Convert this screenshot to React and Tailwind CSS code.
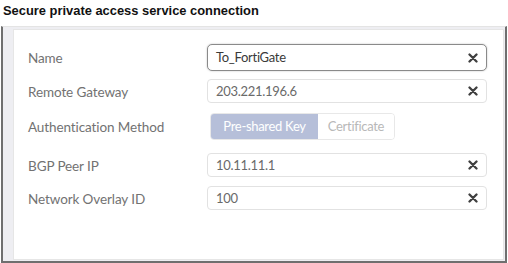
import React from "react";

function XIcon() {
  return (
    <svg width="10" height="10" viewBox="0 0 10 10" className="shrink-0">
      <path d="M1.5 1.5 L8.5 8.5 M8.5 1.5 L1.5 8.5" stroke="#3f3f3f" strokeWidth="2.3" strokeLinecap="round" />
    </svg>
  );
}

function Field({ value, focused }) {
  return (
    <div
      className={
        focused
          ? "w-[280px] h-full flex items-center justify-between pl-[8px] pr-[8px] border border-[#8a8a8a] rounded-[5px] bg-white shadow-[0_0_2px_rgba(0,0,0,0.25)] text-[#3a3a3a]"
          : "w-[280px] h-full flex items-center justify-between pl-[8px] pr-[8px] border border-[#e2e2e2] rounded-[4px] bg-white text-[#6a6a6a]"
      }
    >
      <span className="text-[13px] tracking-[-0.3px] pt-[1px]">{value}</span>
      <XIcon />
    </div>
  );
}

function Row({ label, children, className }) {
  return (
    <div className={"flex items-center " + className}>
      <div className="w-[179px] text-[13.5px] text-[#727272] tracking-[-0.1px] pt-[2px]">{label}</div>
      {children}
    </div>
  );
}

export default function App() {
  return (
    <div className="w-[508px] h-[263px] bg-white flex flex-col overflow-hidden" style={{ fontFamily: "Lato, 'Open Sans', sans-serif" }}>
      <div className="pl-[3px] pt-[1px] h-[26px] text-[12.9px] font-bold text-[#111]" style={{ fontFamily: "'Liberation Sans', Arial, sans-serif" }}>
        Secure private access service connection
      </div>
      <div className="flex-1 ml-[1px] mr-[1px] border-l-2 border-r-2 border-b-2 border-[#6f6f6f] border-t border-t-[#e4e4e4] bg-[#eeeef2] pl-[10px] pr-[1px] pt-[2px] pb-[1px] flex">
        <div className="flex-1 bg-white border border-[#e6e6e6] pl-[14px] flex flex-col">
          <Row label="Name" className="mt-[14px] h-[27px]">
            <Field value="To_FortiGate" focused />
          </Row>
          <Row label="Remote Gateway" className="mt-[8px] h-[24px]">
            <Field value="203.221.196.6" />
          </Row>
          <Row label="Authentication Method" className="mt-[10px] h-[27px]">
            <div className="h-full flex ml-[3px] rounded-[4px] overflow-hidden border border-[#e8e8e8]">
              <div className="w-[107px] bg-[#b6bfd9] text-white text-[13px] flex items-center justify-center tracking-[-0.3px]">Pre-shared Key</div>
              <div className="w-[76px] bg-white text-[#b8b8b8] text-[13px] flex items-center justify-center tracking-[-0.3px]">Certificate</div>
            </div>
          </Row>
          <Row label="BGP Peer IP" className="mt-[13px] h-[24px]">
            <Field value="10.11.11.1" />
          </Row>
          <Row label="Network Overlay ID" className="mt-[9px] h-[24px]">
            <Field value="100" />
          </Row>
        </div>
      </div>
    </div>
  );
}
